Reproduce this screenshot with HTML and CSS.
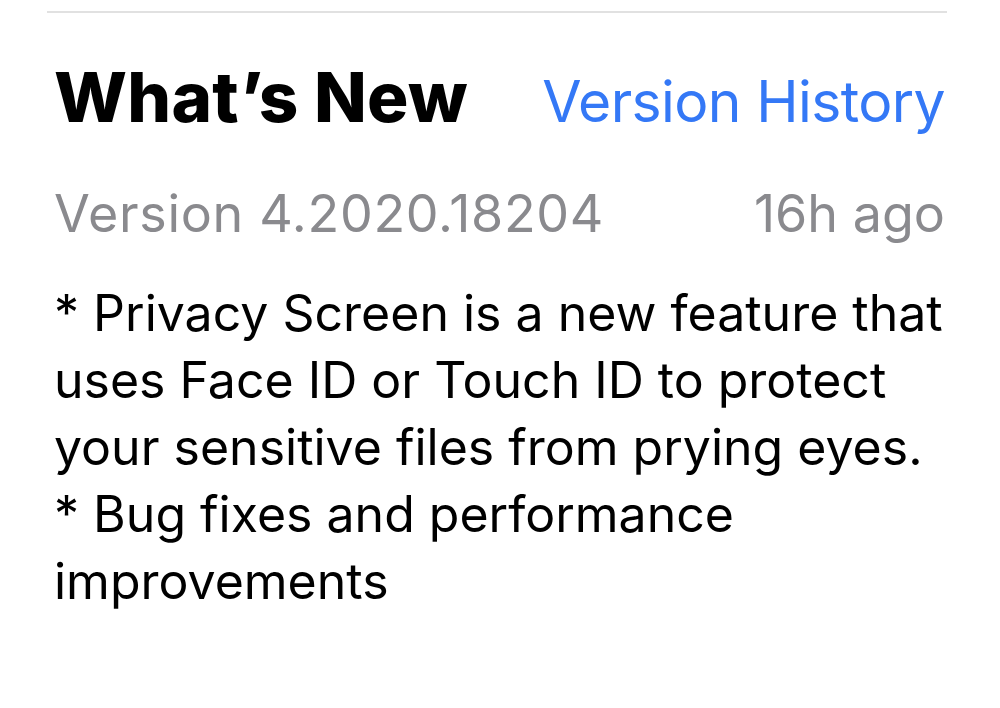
FILE: index.html
```html
<!DOCTYPE html>
<html lang="en">
  <head>
    <meta charset="UTF-8" />
    <title>What's New</title>
    <link rel="stylesheet" href="styles.css">
  </head>
  <body>
    <div class="section">
      <div class="section-head">
        <h2>What’s New</h2>
        <a href="#" class="link">Version History</a>
      </div>
      <div class="meta">
        <span class="version">Version 4.2020.18204</span>
        <span>16h ago</span>
      </div>
      <p class="notes">
        * Privacy Screen is a new feature that uses Face ID or Touch ID to protect your sensitive files from prying eyes.<br />
        * Bug fixes and performance improvements
      </p>
    </div>
  </body>
</html>
```

FILE: styles.css
```css
body {
  margin: 0;
  font-family: Inter, "Open Sans", sans-serif;
  background: #fff;
  color: #000;
}
.section {
  margin: 11px 53px 0 47px;
  border-top: 2px solid #e1e1e1;
  padding: 0 2px 0 7px;
}
.section-head {
  display: flex;
  justify-content: space-between;
  align-items: baseline;
  margin-top: 44px;
}
h2 {
  margin: 0;
  font-size: 69px;
  font-weight: 800;
  letter-spacing: 0.3px;
  line-height: 80px;
}
.link {
  color: #3478f6;
  text-decoration: none;
  font-size: 57px;
  letter-spacing: -0.6px;
  line-height: 80px;
}
.meta {
  display: flex;
  justify-content: space-between;
  color: #8a8a8e;
  font-size: 52px;
  line-height: 64px;
  margin-top: 40px;
}
.version {
  letter-spacing: 0.7px;
}
.notes {
  margin: 34px 0 0;
  font-size: 50px;
  letter-spacing: 0;
  line-height: 67px;
}
```
